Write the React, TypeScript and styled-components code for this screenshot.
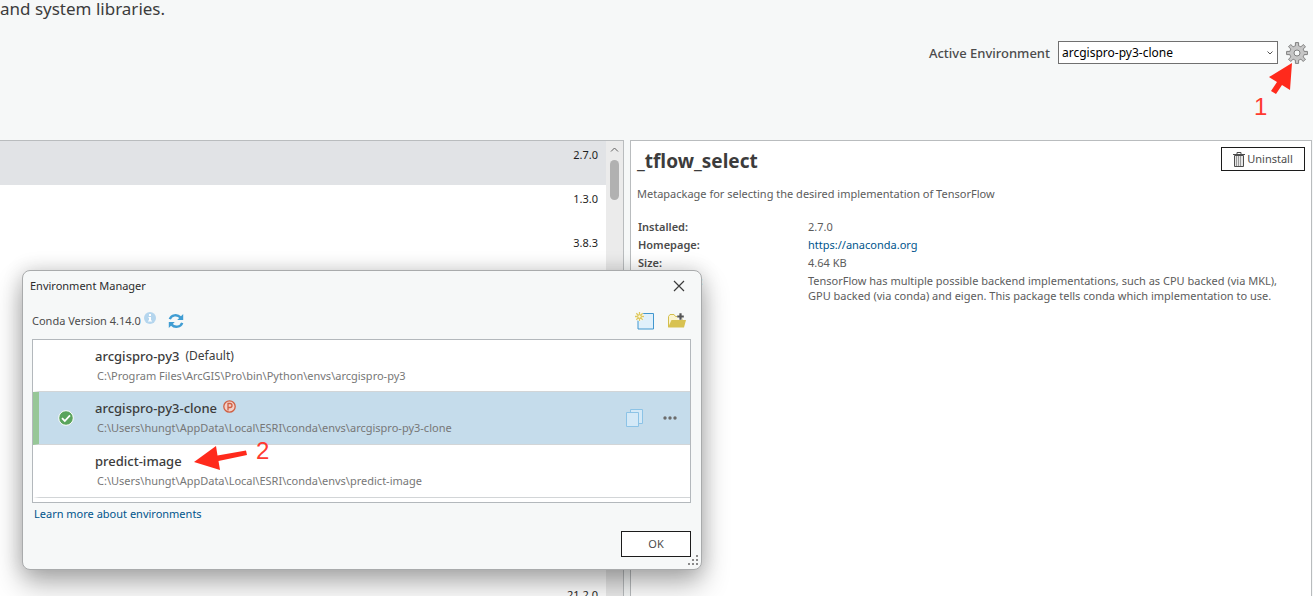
import React from 'react';
import styled, { createGlobalStyle } from 'styled-components';

const GlobalStyle = createGlobalStyle`
  *, *::before, *::after { box-sizing: border-box; }
  body {
    margin: 0;
    background: #f6f8f8;
    color: #4c4c4c;
    font-family: "Noto Sans", "Open Sans", sans-serif;
    font-size: 11px;
    line-height: 16px;
  }
  button, select { font-family: inherit; font-size: inherit; line-height: inherit; color: inherit; }
  a { color: #00558c; text-decoration: none; }
  svg { display: block; flex: none; }
`;

const Page = styled.div`
  position: relative;
  display: flex;
  flex-direction: column;
  height: 100vh;
  overflow: hidden;
`;

const Header = styled.header`
  display: flex;
  flex-direction: column;
  flex: none;
  height: 140px;
`;

const Intro = styled.p`
  margin: 0;
  font-size: 17px;
  line-height: 18px;
  color: #3c3c3c;
`;

const EnvBar = styled.div`
  display: flex;
  align-items: center;
  justify-content: flex-end;
  gap: 8px;
  margin-top: 23px;
  padding-right: 5px;
`;

const EnvLabel = styled.label`
  font-size: 13px;
  line-height: 20px;
  font-weight: 500;
  color: #4c4c4c;
`;

const SelectWrap = styled.div`
  display: grid;
  width: 220px;
  height: 23px;
  align-items: center;
  > * { grid-area: 1 / 1; }
  > svg { justify-self: end; margin-right: 4px; pointer-events: none; }
`;

const EnvSelect = styled.select`
  appearance: none;
  width: 100%;
  height: 100%;
  padding: 0 3px;
  border: 1px solid #707070;
  border-radius: 0;
  background: #fff;
  color: #000;
  font-size: 12px;
`;

const IconButton = styled.button`
  display: flex;
  align-items: center;
  justify-content: center;
  padding: 0;
  border: 0;
  background: none;
`;

const GearSlot = styled.div`
  position: relative;
`;

const Panels = styled.main`
  display: grid;
  grid-template-columns: minmax(0, 624fr) minmax(0, 682fr);
  grid-template-rows: minmax(0, 1fr);
  flex: 1;
  min-height: 0;
  gap: 6px;
  padding-right: 1px;
`;

const PackagePane = styled.section`
  display: flex;
  border: solid #b9bcbe;
  border-width: 1px 1px 0 0;
  background: #fff;
`;

const PackageList = styled.ul`
  flex: 1;
  margin: 0;
  padding: 0;
  list-style: none;
  overflow: hidden;
`;

const PackageRow = styled.li<{ $selected?: boolean }>`
  height: 44px;
  padding: 6px 8px 0 0;
  text-align: right;
  color: #1e1e1e;
  background: ${(p) => (p.$selected ? '#e1e3e6' : '#fff')};
`;

const ScrollTrack = styled.div`
  display: flex;
  flex-direction: column;
  align-items: center;
  gap: 8px;
  width: 17px;
  padding-top: 6px;
  background: #ebebeb;
`;

const ScrollThumb = styled.div`
  width: 9px;
  height: 40px;
  border-radius: 5px;
  background: #b1b1b1;
`;

const DetailPane = styled.section`
  padding: 6px;
  border: 1px solid #b9bcbe;
  border-bottom: 0;
  background: #fff;
`;

const DetailHead = styled.div`
  display: flex;
  align-items: flex-start;
  justify-content: space-between;
`;

const DetailTitle = styled.h1`
  margin: 0;
  font-size: 19px;
  line-height: 28px;
  font-weight: 700;
  color: #3c3c3c;
`;

const UninstallButton = styled.button`
  display: flex;
  align-items: center;
  justify-content: center;
  gap: 2px;
  width: 84px;
  height: 24px;
  padding: 0;
  border: 1px solid #1c1c1c;
  background: #fff;
`;

const Summary = styled.p`
  margin: 11px 0 17px;
  color: #5c5c5c;
`;

const Facts = styled.dl`
  display: grid;
  grid-template-columns: 170px 1fr;
  row-gap: 3px;
  margin: 0 0 0 1px;
  line-height: 15px;
  dt { font-weight: 600; }
  dd { margin: 0; padding-right: 10px; color: #5c5c5c; }
`;

const Dialog = styled.div`
  position: absolute;
  top: 270px;
  left: 22px;
  display: flex;
  flex-direction: column;
  width: 680px;
  height: 300px;
  padding: 0 10px 12px 9px;
  border: 1px solid #a9abac;
  border-radius: 8px;
  background: #f6f8f8;
  box-shadow: 0 14px 28px rgba(0, 0, 0, 0.3), 0 0 20px rgba(0, 0, 0, 0.16);
`;

const DialogHead = styled.div`
  display: flex;
  align-items: center;
  justify-content: space-between;
  height: 30px;
  margin-left: -2px;
  padding-right: 6px;
`;

const DialogTitle = styled.h2`
  margin: 0;
  font-size: 11px;
  line-height: 16px;
  font-weight: 400;
  color: #2c2c2c;
`;

const ToolRow = styled.div`
  display: flex;
  align-items: center;
  height: 38px;
  padding: 2px 4px 0 0;
`;

const InfoSlot = styled.span`
  margin: 0 12px 6px 3px;
`;

const ToolActions = styled.div`
  display: flex;
  gap: 12px;
  margin-left: auto;
`;

const EnvList = styled.ul`
  margin: 0;
  padding: 0;
  height: 164px;
  list-style: none;
  border: 1px solid #b3b8bc;
  background: #fff;
`;

const EnvRow = styled.li<{ $active?: boolean }>`
  display: flex;
  align-items: center;
  height: 52px;
  border-bottom: 1px solid #d2d5d7;
  border-left: 6px solid ${(p) => (p.$active ? '#97c797' : 'transparent')};
  background: ${(p) => (p.$active ? '#c5dceb' : '#fff')};
  background-clip: padding-box;
  & + & { height: 53px; }
`;

const EnvStatus = styled.div`
  width: 56px;
  padding-left: 19px;
`;

const EnvText = styled.div`
  flex: 1;
`;

const EnvName = styled.div`
  display: flex;
  align-items: center;
  position: relative;
  font-size: 12px;
  line-height: 20px;
  color: #3c3c3c;
  strong { font-size: 13px; font-weight: 500; margin-right: 6px; }
  svg { margin-bottom: 4px; }
`;

const EnvPath = styled.div`
  padding-left: 2px;
  line-height: 20px;
  color: #777;
`;

const RowActions = styled.div`
  display: flex;
  align-items: center;
  gap: 20px;
  padding-right: 13px;
`;

const LearnMore = styled.a`
  align-self: flex-start;
  margin: 3px 2px 9px;
`;

const OkButton = styled.button`
  align-self: flex-end;
  width: 70px;
  height: 26px;
  border: 1px solid #1c1c1c;
  background: #fff;
  color: #4c4c4c;
`;

const Grip = styled.div`
  position: absolute;
  right: 3px;
  bottom: 4px;
`;

const Callout = styled.div<{ $x: number; $y: number }>`
  position: absolute;
  left: ${(p) => p.$x}px;
  top: ${(p) => p.$y}px;
  pointer-events: none;
`;

const CalloutNumber = styled(Callout)`
  font-family: "Liberation Sans", Arial, sans-serif;
  font-size: 24px;
  line-height: 24px;
  color: #ff3a30;
`;

const Gear = () => (
  <svg width="22" height="22" viewBox="-11 -11 22 22">
    <path
      d="M-1.6-10.4H1.6V-7.1A7.2 7.2 0 0 1 3.9-6.1L6.2-8.5L8.5-6.2L6.1-3.9A7.2 7.2 0 0 1 7.1-1.6H10.4V1.6H7.1A7.2 7.2 0 0 1 6.1 3.9L8.5 6.2L6.2 8.5L3.9 6.1A7.2 7.2 0 0 1 1.6 7.1V10.4H-1.6V7.1A7.2 7.2 0 0 1-3.9 6.1L-6.2 8.5L-8.5 6.2L-6.1 3.9A7.2 7.2 0 0 1-7.1 1.6H-10.4V-1.6H-7.1A7.2 7.2 0 0 1-6.1-3.9L-8.5-6.2L-6.2-8.5L-3.9-6.1A7.2 7.2 0 0 1-1.6-7.1Z"
      fill="#c6c6c6"
      stroke="#808080"
      strokeWidth="1"
    />
    <circle r="3" fill="#f6f8f8" stroke="#808080" />
  </svg>
);

const Trash = () => (
  <svg width="12" height="15" viewBox="0 0 12 15" fill="none" stroke="#4c4c4c">
    <path d="M1.5 3.5h9v11h-9z" fill="#e6e6e6" />
    <path d="M0 2.5h12M4 2V.5h4V2" />
    <path d="M3.5 4v10M5.5 4v10M7.5 4v10" stroke="#999" />
  </svg>
);

const Info = () => (
  <svg width="12" height="12" viewBox="0 0 12 12">
    <circle cx="6" cy="6" r="6" fill="#b5d6ee" />
    <path d="M5 2h2v2H5zM4.5 5H7v3.5h1v1H4v-1h1V6h-.5z" fill="#fff" />
  </svg>
);

const Refresh = () => (
  <svg width="16" height="16" viewBox="0 0 16 16">
    <g fill="none" stroke="#409dd3" strokeWidth="2.4">
      <path d="M1.800 6.200C3.200 2 9.200 .8 12.400 4.400" />
      <path d="M14.200 9.800C12.800 14 6.800 15.200 3.600 11.600" />
    </g>
    <path d="M15.200 1v6H9.200zM.8 15V9h6z" fill="#409dd3" />
  </svg>
);

const NewEnv = () => (
  <svg width="20" height="18" viewBox="0 0 20 18">
    <path d="M3 1.5h15.500v15.500H3z" fill="#e0f0fb" stroke="#4197cf" />
    <circle cx="4.500" cy="4.500" r="4.500" fill="#f6f8f8" />
    <path d="M4.500 0v9M0 4.500h9M1.300 1.300l6.400 6.400M7.700 1.300L1.300 7.700" stroke="#dfc95f" strokeWidth="1.300" />
    <circle cx="4.500" cy="4.500" r="1.700" fill="#fff8d8" stroke="#dfc95f" />
  </svg>
);

const FolderAdd = () => (
  <svg width="20" height="18" viewBox="0 0 20 18">
    <path d="M1.500 15V4.500L3 2.500h4l1.500 2h7V8" fill="#fbf4cf" stroke="#d3be4c" />
    <path d="M1 15.500L4.500 8H19l-2 7.500z" fill="#d8c251" />
    <path d="M13.500 1v7M10 4.500h7" stroke="#f6f8f8" strokeWidth="4" />
    <path d="M13.500 1.200v6.600M10.200 4.500h6.600" stroke="#555" strokeWidth="2.200" />
  </svg>
);

const Check = () => (
  <svg width="16" height="16" viewBox="0 0 16 16">
    <circle cx="8" cy="8" r="7.300" fill="#5aa45c" stroke="#fff" strokeWidth="1" />
    <path d="M4 8.200l2.800 2.800L12 5.300" fill="none" stroke="#fff" strokeWidth="1.800" />
  </svg>
);

const ProBadge = () => (
  <svg width="13" height="13" viewBox="0 0 13 13" fill="none" stroke="#cf5f43">
    <circle cx="6.500" cy="6.500" r="5.700" fill="#f3d0c8" strokeWidth="1.300" />
    <path d="M5 10.500V3.500h2a2 2 0 0 1 0 4H5" strokeWidth="1.300" />
  </svg>
);

const Copy = () => (
  <svg width="17" height="18" viewBox="0 0 17 18" fill="#d4e9f7" stroke="#8cc3e6">
    <path d="M4.500 .500h12v14h-12z" />
    <path d="M.500 3.500h12v14h-12z" />
  </svg>
);

const Dots = () => (
  <svg width="14" height="4" viewBox="0 0 14 4" fill="#6c6c6c">
    <circle cx="2" cy="2" r="1.700" />
    <circle cx="7" cy="2" r="1.700" />
    <circle cx="12" cy="2" r="1.700" />
  </svg>
);

const versions = ['2.7.0', '1.3.0', '3.8.3', '', '', '', '', '', '', '', '21.2.0'];

export default function App() {
  return (
    <Page>
      <GlobalStyle />
      <Header>
        <Intro>and system libraries.</Intro>
        <EnvBar>
          <EnvLabel htmlFor="active-env">Active Environment</EnvLabel>
          <SelectWrap>
            <EnvSelect id="active-env">
              <option>arcgispro-py3-clone</option>
            </EnvSelect>
            <svg width="8" height="6" viewBox="0 0 8 6" fill="none" stroke="#555">
              <path d="M1.500 1.500L4 4l2.500-2.500" />
            </svg>
          </SelectWrap>
          <GearSlot>
            <IconButton aria-label="Manage environments">
              <Gear />
            </IconButton>
            <Callout $x={-18} $y={20}>
              <svg width="26" height="34" viewBox="0 0 26 34">
                <path d="M24 1L22 28L14 23L8 32L3 29L9 20L1 15Z" fill="#ff2a1c" />
              </svg>
            </Callout>
            <CalloutNumber $x={-32} $y={53}>1</CalloutNumber>
          </GearSlot>
        </EnvBar>
      </Header>

      <Panels>
        <PackagePane>
          <PackageList>
            {versions.map((version, i) => (
              <PackageRow key={i} $selected={i === 0}>{version}</PackageRow>
            ))}
          </PackageList>
          <ScrollTrack>
            <svg width="9" height="5" viewBox="0 0 9 5" fill="none" stroke="#606060">
              <path d="M1 4.500L4.500 1L8 4.500" />
            </svg>
            <ScrollThumb />
          </ScrollTrack>
        </PackagePane>

        <DetailPane>
          <DetailHead>
            <DetailTitle>_tflow_select</DetailTitle>
            <UninstallButton>
              <Trash />
              Uninstall
            </UninstallButton>
          </DetailHead>
          <Summary>Metapackage for selecting the desired implementation of TensorFlow</Summary>
          <Facts>
            <dt>Installed:</dt>
            <dd>2.7.0</dd>
            <dt>Homepage:</dt>
            <dd><a href="https://anaconda.org">https://anaconda.org</a></dd>
            <dt>Size:</dt>
            <dd>4.64 KB</dd>
            <dt>Description:</dt>
            <dd>
              TensorFlow has multiple possible backend implementations, such as CPU backed (via MKL),
              GPU backed (via conda) and eigen. This package tells conda which implementation to use.
            </dd>
          </Facts>
        </DetailPane>
      </Panels>

      <Dialog role="dialog" aria-labelledby="dialog-title">
        <DialogHead>
          <DialogTitle id="dialog-title">Environment Manager</DialogTitle>
          <IconButton aria-label="Close">
            <svg width="12" height="12" viewBox="0 0 12 12" stroke="#3c3c3c" strokeWidth="1.200">
              <path d="M1 1l10 10M11 1L1 11" />
            </svg>
          </IconButton>
        </DialogHead>
        <ToolRow>
          <span>Conda Version 4.14.0</span>
          <InfoSlot><Info /></InfoSlot>
          <IconButton aria-label="Refresh"><Refresh /></IconButton>
          <ToolActions>
            <IconButton aria-label="New environment"><NewEnv /></IconButton>
            <IconButton aria-label="Add environment"><FolderAdd /></IconButton>
          </ToolActions>
        </ToolRow>
        <EnvList>
          <EnvRow>
            <EnvStatus />
            <EnvText>
              <EnvName><strong>arcgispro-py3</strong>(Default)</EnvName>
              <EnvPath>C:\Program Files\ArcGIS\Pro\bin\Python\envs\arcgispro-py3</EnvPath>
            </EnvText>
          </EnvRow>
          <EnvRow $active>
            <EnvStatus><Check /></EnvStatus>
            <EnvText>
              <EnvName><strong>arcgispro-py3-clone</strong><ProBadge /></EnvName>
              <EnvPath>C:\Users\hungt\AppData\Local\ESRI\conda\envs\arcgispro-py3-clone</EnvPath>
            </EnvText>
            <RowActions>
              <IconButton aria-label="Clone"><Copy /></IconButton>
              <IconButton aria-label="More"><Dots /></IconButton>
            </RowActions>
          </EnvRow>
          <EnvRow>
            <EnvStatus />
            <EnvText>
              <EnvName>
                <strong>predict-image</strong>
                <Callout $x={99} $y={-5}>
                  <svg width="56" height="26" viewBox="0 0 56 26">
                    <path d="M0 16L22 0L23.500 9.500L52 4.500L53 9L24.500 15L26 24Z" fill="#ff2a1c" />
                  </svg>
                </Callout>
                <CalloutNumber $x={161} $y={-12}>2</CalloutNumber>
              </EnvName>
              <EnvPath>C:\Users\hungt\AppData\Local\ESRI\conda\envs\predict-image</EnvPath>
            </EnvText>
          </EnvRow>
        </EnvList>
        <LearnMore href="#environments">Learn more about environments</LearnMore>
        <OkButton>OK</OkButton>
        <Grip>
          <svg width="10" height="10" viewBox="0 0 10 10" fill="#8a8a8a">
            <path d="M8 0h2v2H8zM4 4h2v2H4zM8 4h2v2H8zM0 8h2v2H0zM4 8h2v2H4zM8 8h2v2H8z" />
          </svg>
        </Grip>
      </Dialog>
    </Page>
  );
}
